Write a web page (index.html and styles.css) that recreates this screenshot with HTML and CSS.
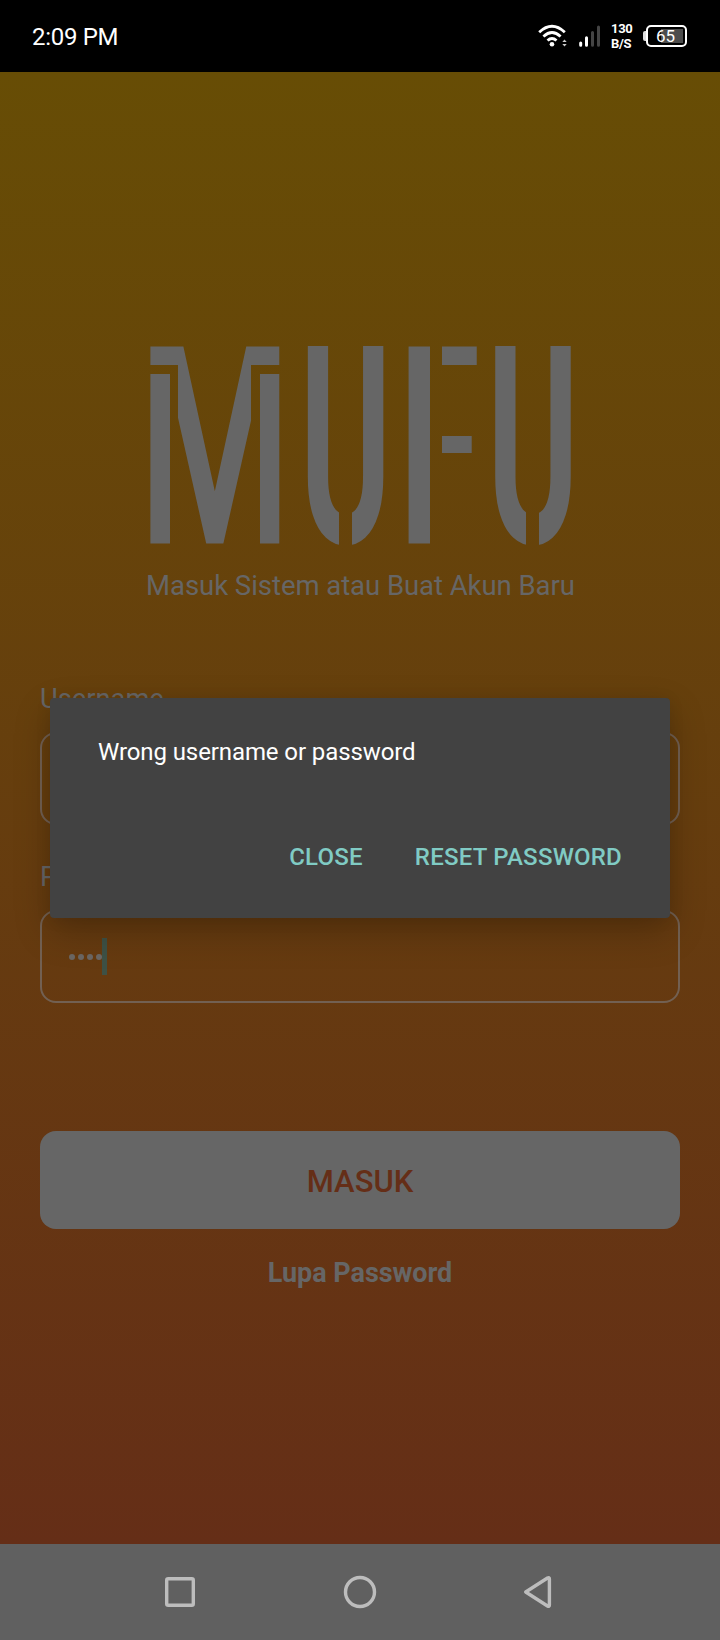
FILE: index.html
```html
<!DOCTYPE html>
<html lang="id">
<head>
<meta charset="utf-8">
<title>MUFU</title>
<link rel="stylesheet" href="styles.css">
</head>
<body>
<div class="phone">
  <header class="status">
    <span class="time">2:09 PM</span>
    <svg class="wifi" width="30" height="24" viewBox="0 0 30 24">
      <g fill="none" stroke="#fff" stroke-width="2.8">
        <path d="M1.2 8.2Q14 -3.8 26.8 8.2"/><path d="M5.4 12.5Q14 4.6 22.6 12.5"/><path d="M9.5 16.5Q14 12.4 18.5 16.5"/>
      </g>
      <circle cx="14" cy="20.3" r="2.3" fill="#fff"/>
      <path d="M24.3 18l2.2-2.6 2.2 2.6zM24.3 20l2.2 2.6 2.2-2.6z" fill="#ccc"/>
    </svg>
    <svg class="signal" width="22" height="22" viewBox="0 0 22 22">
      <g stroke-width="3" stroke-linecap="round"><path d="M1.7 18v2.3M7.5 12.7v7.6" stroke="#fff"/><path d="M13.5 7.5v12.8M19.5 2v18.3" stroke="#444"/></g>
    </svg>
    <span class="rate"><span>130</span><span>B/S</span></span>
    <span class="battery"><i class="tip"></i><span class="cell">65</span></span>
  </header>
  <main class="screen">
    <svg class="logo" width="424" height="200" viewBox="0 0 424 200" role="img" aria-label="MUFU">
      <mask id="stencil" maskUnits="userSpaceOnUse" x="-4" y="-1" width="428" height="201">
        <rect x="-4" y="-1" width="428" height="201" fill="#fff"/>
        <rect x="-4" y="18" width="30" height="9"/><rect x="99" y="18" width="32" height="9"/>
        <rect x="18" y="18" width="8" height="182"/><rect x="99" y="18" width="9" height="182"/>
        <rect x="187" y="120" width="13" height="80"/><rect x="374" y="120" width="13" height="80"/>
        <rect x="278" y="-1" width="12" height="201"/>
        <rect x="290" y="18" width="40" height="71"/><rect x="290" y="106" width="40" height="40"/>
      </mask>
      <g mask="url(#stencil)" class="wordmark" transform="translate(2 1)">
        <text transform="translate(-12.5 196.5) scale(.622 1)">M</text>
        <text transform="translate(147.9 196) scale(.5 1)">U</text>
        <text transform="translate(247.3 196.5) scale(.53 1)">F</text>
        <text transform="translate(335.3 196) scale(.5 1)">U</text>
      </g>
    </svg>
    <p class="subtitle">Masuk Sistem atau Buat Akun Baru</p>
    <form class="form">
      <label class="label">Username</label>
      <div class="field"></div>
      <label class="label">Password</label>
      <div class="field"><i class="dot"></i><i class="dot"></i><i class="dot"></i><i class="dot"></i><i class="caret"></i></div>
      <button class="login" type="button">MASUK</button>
    </form>
    <a class="forgot">Lupa Password</a>
  </main>
  <nav class="nav">
    <svg width="180" height="96" viewBox="0 0 180 96"><rect x="76.7" y="34.7" width="26.6" height="26.6" rx="1.5"/></svg>
    <svg width="180" height="96" viewBox="0 0 180 96"><circle cx="90" cy="48" r="14.5"/></svg>
    <svg width="180" height="96" viewBox="0 0 180 96"><path d="M75.7 48L97.5 34Q99.4 33 99.4 35V61Q99.4 63 97.5 62Z"/></svg>
  </nav>
  <section class="dialog" role="dialog">
    <p class="message">Wrong username or password</p>
    <div class="actions"><span class="close">CLOSE</span><span class="reset">RESET PASSWORD</span></div>
  </section>
</div>
</body>
</html>
```
FILE: styles.css
```css
* { box-sizing: border-box; }
body { margin: 0; font-family: Roboto, sans-serif; }
p { margin: 0; }
.phone { position: relative; width: 720px; height: 1640px; display: flex; flex-direction: column; overflow: hidden; }
.status { height: 72px; background: #000; color: #fff; display: flex; align-items: center; padding: 0 33px 0 32px; }
.time { font-size: 24px; line-height: 28px; letter-spacing: -.3px; margin-right: auto; padding-top: 2px; }
.wifi { margin-right: 11px; }
.signal { margin-right: 10px; }
.rate { width: 21px; display: flex; flex-direction: column; font-size: 13px; letter-spacing: -.3px; font-weight: 700; line-height: 15px; margin-right: 11px; }
.battery { display: flex; align-items: center; }
.tip { width: 3px; height: 10px; background: #ddd; border-radius: 2px 0 0 2px; }
.cell { width: 41px; height: 22px; border: 2px solid #fff; border-radius: 5px; font-size: 17px; line-height: 19px; text-align: center; padding-right: 2px; background: linear-gradient(90deg, #000 13px, #4c4c4c 13px) 0 2px / 35px 14px no-repeat; }
.screen { height: 1472px; background: linear-gradient(#674d05, #652e17); display: flex; flex-direction: column; align-items: center; padding-top: 274px; color: #666; }
.logo { display: block; margin-left: 4px; overflow: visible; }
.wordmark { fill: #666; font: 700 277px Roboto, sans-serif; }
.subtitle { margin-top: 24px; padding-left: 1px; font-size: 27.5px; letter-spacing: -.05px; line-height: 32px; white-space: nowrap; }
.form { width: 640px; display: flex; flex-direction: column; }
.label { margin-top: 80px; font-size: 27.3px; line-height: 34px; height: 34px; }
.field { margin-top: 16px; height: 93px; border: 2px solid #726052; border-radius: 16px; display: flex; align-items: center; gap: 3px; padding-left: 27px; }
.field + .label { margin-top: 35px; }
.dot { width: 6px; height: 6px; border-radius: 50%; background: #6b6763; }
.caret { width: 5px; height: 37px; background: #3e5145; margin-left: -3px; }
.login { margin-top: 128px; height: 98px; border: 0; border-radius: 16px; background: #666; color: #652e17; font: 500 31px Roboto, sans-serif; padding: 3px 0 0; }
.forgot { margin-top: 28px; font-size: 27px; letter-spacing: -.05px; line-height: 32px; font-weight: 700; }
.nav { height: 96px; background: #606060; display: flex; justify-content: center; fill: none; stroke: #bdbdbd; stroke-width: 3.4; stroke-linejoin: round; }
.dialog { position: absolute; left: 50px; top: 698px; width: 620px; height: 220px; padding: 39px 48px 0; background: #424242; border-radius: 4px; box-shadow: 0 14px 36px rgba(0,0,0,.22), 0 2px 16px rgba(0,0,0,.08); }
.message { color: #fff; font-size: 24px; line-height: 30px; letter-spacing: -.1px; }
.actions { margin-top: 75px; display: flex; justify-content: flex-end; gap: 52px; color: #80cbc4; font-size: 24px; line-height: 30px; font-weight: 500; letter-spacing: .23px; }
```
